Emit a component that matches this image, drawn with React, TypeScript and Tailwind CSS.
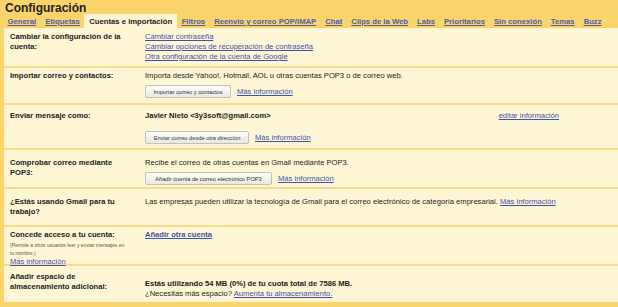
import React from 'react';

const tabs = [
  'General',
  'Etiquetas',
  'Cuentas e importación',
  'Filtros',
  'Reenvío y correo POP/IMAP',
  'Chat',
  'Clips de la Web',
  'Labs',
  'Prioritarios',
  'Sin conexión',
  'Temas',
  'Buzz',
];

function A({ children, bold = false }: { children: React.ReactNode; bold?: boolean }) {
  return (
    <a className={`cursor-pointer text-[#3f51ab] underline ${bold ? 'font-bold' : ''}`}>
      {children}
    </a>
  );
}

function Btn({ children, w }: { children: React.ReactNode; w: string }) {
  return (
    <span
      className={`inline-flex h-[13px] ${w} items-center justify-center whitespace-nowrap rounded-[2px] border border-[#c4c0b4] bg-gradient-to-b from-[#fdfdfb] to-[#e9e7e0] text-[5.7px] text-[#333]`}
    >
      {children}
    </span>
  );
}

function Row({
  label,
  h,
  pt = 'pt-[4px]',
  last = false,
  children,
}: {
  label: React.ReactNode;
  h: string;
  pt?: string;
  last?: boolean;
  children: React.ReactNode;
}) {
  return (
    <div className={`flex ${h} ${pt} ${last ? '' : 'border-b-2 border-[#f8db8a]'}`}>
      <div className="w-[141px] shrink-0 pl-[6px] font-bold text-[#222]">{label}</div>
      <div className="flex-1 text-[#222]">{children}</div>
    </div>
  );
}

export default function App() {
  return (
    <div
      className="h-[307px] w-[618px] overflow-hidden bg-[#fcd46c] text-[7.6px] leading-[10px]"
      style={{ fontFamily: '"Liberation Sans", Arial, sans-serif' }}
    >
      <div className="h-[28px]">
        <div className="px-[5px] pt-[2px] text-[12px] font-bold leading-[13px] text-[#222]">
          Configuración
        </div>
        <div className="flex h-[15px] items-end whitespace-nowrap pl-[3px] text-[7.7px]">
          {tabs.map((t) =>
            t === 'Cuentas e importación' ? (
              <span
                key={t}
                className="flex h-[16px] shrink-0 items-center bg-[#fff6d6] px-[5px] font-bold text-[#222]"
              >
                {t}
              </span>
            ) : (
              <span
                key={t}
                className="flex h-[16px] shrink-0 items-center px-[4.5px] font-bold text-[#4f5fa6] underline"
              >
                {t}
              </span>
            )
          )}
        </div>
      </div>

      <div className="ml-[4px] flex h-[274px] flex-col bg-[#fff6d6]">
        <Row
          h="h-[40px]"
          pt="pt-[4px]"
          label={
            <>
              Cambiar la configuración de la
              <br />
              cuenta:
            </>
          }
        >
          <div className="flex flex-col">
            <A>Cambiar contraseña</A>
            <A>Cambiar opciones de recuperación de contraseña</A>
            <A>Otra configuración de la cuenta de Google</A>
          </div>
        </Row>

        <Row h="h-[37px]" pt="pt-[3px]" label="Importar correo y contactos:">
          <div>Importa desde Yahoo!, Hotmail, AOL u otras cuentas POP3 o de correo web.</div>
          <div className="mt-[4px] flex items-center gap-[6px]">
            <Btn w="w-[86px]">Importar correo y contactos</Btn>
            <A>Más información</A>
          </div>
        </Row>

        <Row h="h-[45px]" pt="pt-[6px]" label="Enviar mensaje como:">
          <div className="flex pr-[59px]">
            <span className="font-bold">Javier Nieto &lt;3y3soft@gmail.com&gt;</span>
            <span className="ml-auto">
              <A>editar información</A>
            </span>
          </div>
          <div className="mt-[10px] flex items-center gap-[6px]">
            <Btn w="w-[104px]">Enviar correo desde otra dirección</Btn>
            <A>Más información</A>
          </div>
        </Row>

        <Row
          h="h-[39px]"
          pt="pt-[8px]"
          label={
            <>
              Comprobar correo mediante
              <br />
              POP3:
            </>
          }
        >
          <div>Recibe el correo de otras cuentas en Gmail mediante POP3.</div>
          <div className="mt-[4px] flex items-center gap-[6px]">
            <Btn w="w-[127px]">Añadir cuenta de correo electrónico POP3</Btn>
            <A>Más información</A>
          </div>
        </Row>

        <Row
          h="h-[38px]"
          pt="pt-[8px]"
          label={
            <>
              ¿Estás usando Gmail para tu
              <br />
              trabajo?
            </>
          }
        >
          <div>
            Las empresas pueden utilizar la tecnología de Gmail para el correo electrónico de
            categoría empresarial. <A>Más información</A>
          </div>
        </Row>

        <Row
          h="h-[39px]"
          pt="pt-[3px]"
          label={
            <div className="flex flex-col">
              <span>Concede acceso a tu cuenta:</span>
              <span className="mt-[1px] text-[5px] font-normal leading-[8px] text-[#555]">
                (Permite a otros usuarios leer y enviar mensajes en
                <br />
                tu nombre.)
              </span>
              <span className="font-normal">
                <A>Más información</A>
              </span>
            </div>
          }
        >
          <A bold>Añadir otra cuenta</A>
        </Row>

        <Row
          h="h-[36px]"
          pt="pt-[6px]"
          last
          label={
            <>
              Añadir espacio de
              <br />
              almacenamiento adicional:
            </>
          }
        >
          <div className="pt-[7px]">
            <div className="font-bold">Estás utilizando 54 MB (0%) de tu cuota total de 7586 MB.</div>
            <div>
              ¿Necesitas más espacio? <A>Aumenta tu almacenamiento.</A>
            </div>
          </div>
        </Row>
      </div>
    </div>
  );
}
